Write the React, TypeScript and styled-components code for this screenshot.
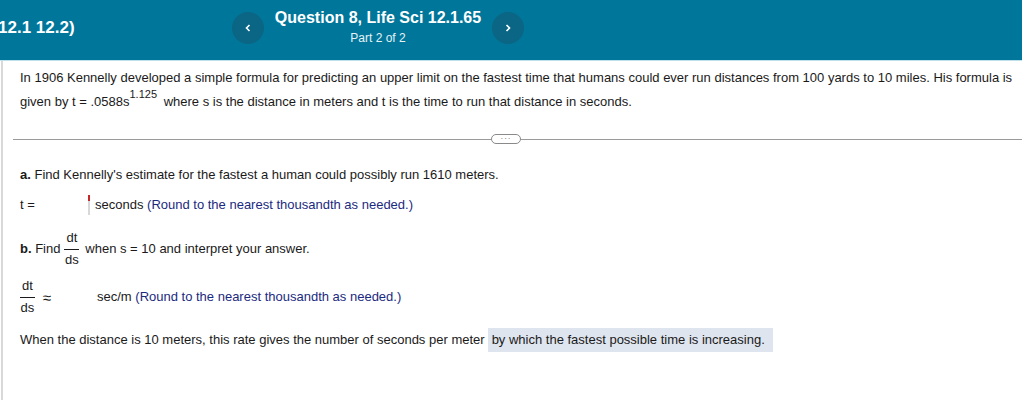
import styled, {createGlobalStyle} from 'styled-components';

const GlobalStyle = createGlobalStyle`
  html, body {
    margin: 0;
    padding: 0;
    background: #ffffff;
    font-family: "Liberation Sans", Arial, sans-serif;
    color: #1a1a1a;
  }
`;

const Page = styled.div`
  width: 1022px;
  height: 400px;
  overflow: hidden;
  background: #fff;
`;

const Header = styled.div`
  height: 60px;
  background: #00779a;
  border-bottom: 1px solid #bfe0ea;
  display: flex;
  align-items: center;
  color: #fff;
`;

const Crumb = styled.div`
  font-size: 17px;
  font-weight: bold;
  margin-left: -2px;
  width: 234px;
  margin-top: -4px;
`;

const NavButton = styled.div`
  width: 32px;
  height: 32px;
  border-radius: 50%;
  background: #0b6584;
  display: flex;
  align-items: center;
  justify-content: center;
  margin-top: -4px;

  svg {
    display: block;
  }
`;

const TitleBlock = styled.div`
  width: 228px;
  display: flex;
  flex-direction: column;
  align-items: center;
  margin-top: -6px;
`;

const Title = styled.div`
  font-size: 16px;
  font-weight: bold;
  line-height: 18px;
`;

const Subtitle = styled.div`
  font-size: 12px;
  line-height: 16px;
  margin-top: 3px;
  color: #e6f2f6;
`;

const Body = styled.div`
  border-left: 2px solid #d9d9d9;
  margin-left: 1px;
  height: 339px;
  font-size: 13px;
`;

const Intro = styled.div`
  padding: 5px 2px 0 17px;
  line-height: 24px;
`;

const Sup = styled.sup`
  font-size: 11px;
  vertical-align: 0;
  position: relative;
  top: -8px;
  margin-right: 3px;
`;

const DividerRow = styled.div`
  margin: 17px 0 0 10px;
  display: flex;
  align-items: center;
  height: 16px;
`;

const Rule = styled.div<{$w?: number}>`
  flex: ${p => (p.$w ? `0 0 ${p.$w}px` : '1')};
  height: 1px;
  background: #9a9a9a;
`;

const Pill = styled.div`
  width: 28px;
  height: 8px;
  border: 1px solid #8a8a8a;
  border-radius: 5px;
  display: flex;
  align-items: center;
  justify-content: center;
  font-size: 8px;
  line-height: 8px;
  color: #555;
  letter-spacing: 1px;
`;

const Section = styled.div`
  padding: 0 17px;
`;

const Line = styled.div<{$top: number}>`
  margin-top: ${p => p.$top}px;
  display: flex;
  align-items: center;
  line-height: 18px;
  white-space: nowrap;
`;

const Bold = styled.b`
  font-weight: bold;
`;

const Hint = styled.span`
  color: #1b2a80;
`;

const Label = styled.span<{$w: number}>`
  display: inline-flex;
  align-items: center;
  width: ${p => p.$w}px;
`;

const Approx = styled.span`
  font-size: 15px;
  margin: 2px 0 0 2px;
`;

const AnswerBox = styled.span`
  display: inline-block;
  width: 2px;
  height: 20px;
  background: linear-gradient(#c62828 0 6px, #d8d8d8 6px);
  margin-right: 5px;
`;

const Frac = styled.span<{$ml?: number}>`
  display: inline-flex;
  flex-direction: column;
  align-items: center;
  margin: 0 6px 0 ${p => p.$ml ?? 4}px;
  font-size: 13px;
  line-height: 14px;
`;

const FracTop = styled.span`
  border-bottom: 1px solid #1a1a1a;
  padding: 0 2px 4px;
`;

const FracBottom = styled.span`
  padding-top: 3px;
`;

const Highlight = styled.span`
  background: #dfe5ee;
  padding: 3px 8px 3px 4px;
  margin-left: 3px;
`;

const Chevron = ({dir}: {dir: 'left' | 'right'}) => (
  <svg width="8" height="10" viewBox="0 0 8 10">
    <path
      d={dir === 'left' ? 'M5.5 2 L2.5 5 L5.5 8' : 'M2.5 2 L5.5 5 L2.5 8'}
      fill="none"
      stroke="#fff"
      strokeWidth="1.6"
    />
  </svg>
);

export default function App() {
  return (
    <Page>
      <GlobalStyle/>
      <Header>
        <Crumb>12.1 12.2)</Crumb>
        <NavButton><Chevron dir="left"/></NavButton>
        <TitleBlock>
          <Title>Question 8, Life Sci 12.1.65</Title>
          <Subtitle>Part 2 of 2</Subtitle>
        </TitleBlock>
        <NavButton><Chevron dir="right"/></NavButton>
      </Header>
      <Body>
        <Intro>
          In 1906 Kennelly developed a simple formula for predicting an upper limit on the fastest time that humans
          could ever run distances from 100 yards to 10 miles. His formula is given by t = .0588s<Sup>1.125</Sup> where
          s is the distance in meters and t is the time to run that distance in seconds.
        </Intro>
        <DividerRow>
          <Rule $w={478}/>
          <Pill>···</Pill>
          <Rule/>
        </DividerRow>
        <Section>
          <Line $top={19}>
            <span><Bold>a.</Bold> Find Kennelly's estimate for the fastest a human could possibly run 1610 meters.</span>
          </Line>
          <Line $top={11}>
            <Label $w={68}>t =</Label>
            <AnswerBox/>
            <span>seconds <Hint>(Round to the nearest thousandth as needed.)</Hint></span>
          </Line>
          <Line $top={16}>
            <span><Bold>b.</Bold> Find</span>
            <Frac><FracTop>dt</FracTop><FracBottom>ds</FracBottom></Frac>
            <span>when s = 10 and interpret your answer.</span>
          </Line>
          <Line $top={12}>
            <Label $w={77}>
              <Frac $ml={0}><FracTop>dt</FracTop><FracBottom>ds</FracBottom></Frac>
              <Approx>≈</Approx>
            </Label>
            <span>sec/m <Hint>(Round to the nearest thousandth as needed.)</Hint></span>
          </Line>
          <Line $top={13}>
            <span>When the distance is 10 meters, this rate gives the number of seconds per meter</span>
            <Highlight>by which the fastest possible time is increasing.</Highlight>
          </Line>
        </Section>
      </Body>
    </Page>
  );
}
